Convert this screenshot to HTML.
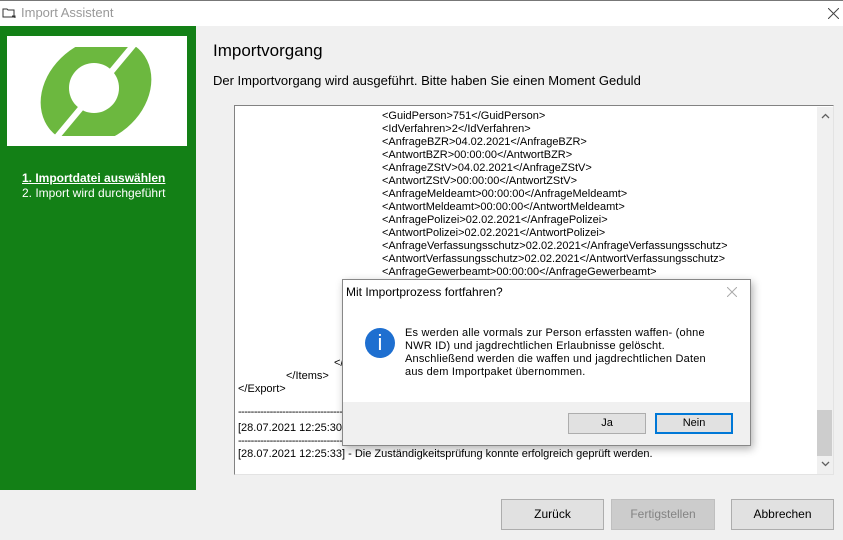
<!DOCTYPE html>
<html><head><meta charset="utf-8"><style>
*{margin:0;padding:0;box-sizing:border-box}
body{width:843px;height:540px;background:#f0f0f0;font-family:"Liberation Sans",sans-serif;position:relative;overflow:hidden;font-size:11px;color:#000}
.a{position:absolute;white-space:nowrap}
.btn{position:absolute;border:1px solid #adadad;background:#e1e1e1;text-align:center;font-size:12px}
</style></head><body>
<div class="a" style="left:0;top:0;width:843px;height:26px;background:#fff;border-top:1px solid #777"></div>
<svg class="a" style="left:2px;top:7px" width="14" height="12"><path d="M1 2h4l1 1h6v7H1z" fill="none" stroke="#333"/><path d="M10 9h3v2" stroke="#333" fill="none"/></svg>
<div class="a" style="left:21px;top:5px;font-size:13px;color:#999">Import Assistent</div>
<svg class="a" style="left:828px;top:8px" width="11" height="11"><path d="M0 0L11 11M11 0L0 11" stroke="#444" stroke-width="1"/></svg>
<div class="a" style="left:0;top:26px;width:196px;height:464px;background:#138016"></div>
<div class="a" style="left:7px;top:36px;width:180px;height:110px;background:#fff"></div>
<svg class="a" style="left:7px;top:36px" width="180" height="110">
<ellipse cx="89" cy="55" rx="60" ry="48" fill="#6cb83f" transform="rotate(-40 89 55)"/>
<circle cx="87" cy="52" r="25" fill="#fff"/>
<path d="M139 -6 L39 114" stroke="#fff" stroke-width="6"/>
<rect x="0" y="0" width="180" height="11" fill="#fff"/>
<rect x="0" y="100" width="180" height="10" fill="#fff"/>
</svg>
<div class="a" style="left:22px;top:171px;color:#fff;font-weight:bold;font-size:12px;text-decoration:underline">1. Importdatei auswählen</div>
<div class="a" style="left:22px;top:186px;color:#fff;font-size:12px">2. Import wird durchgeführt</div>
<div class="a" style="left:213px;top:41px;font-size:17px">Importvorgang</div>
<div class="a" style="left:213px;top:73px;font-size:13px">Der Importvorgang wird ausgeführt. Bitte haben Sie einen Moment Geduld</div>
<div class="a" style="left:234px;top:105px;width:600px;height:370px;background:#fff;border:1px solid #828282;border-bottom-color:#e3e3e3;border-right-color:#e3e3e3"></div>
<div class="a" style="left:817px;top:107px;width:16px;height:367px;background:#f0f0f0"></div>
<div class="a" style="left:817px;top:410px;width:15px;height:46px;background:#cdcdcd"></div>
<svg class="a" style="left:821px;top:113px" width="9" height="6"><path d="M1 5L4.5 1.5L8 5" stroke="#606060" fill="none" stroke-width="1.3"/></svg>
<svg class="a" style="left:821px;top:461px" width="9" height="6"><path d="M1 1L4.5 4.5L8 1" stroke="#606060" fill="none" stroke-width="1.3"/></svg>
<div class="a" style="left:382px;top:110px;line-height:13px">&lt;GuidPerson&gt;751&lt;/GuidPerson&gt;<br>&lt;IdVerfahren&gt;2&lt;/IdVerfahren&gt;<br>&lt;AnfrageBZR&gt;04.02.2021&lt;/AnfrageBZR&gt;<br>&lt;AntwortBZR&gt;00:00:00&lt;/AntwortBZR&gt;<br>&lt;AnfrageZStV&gt;04.02.2021&lt;/AnfrageZStV&gt;<br>&lt;AntwortZStV&gt;00:00:00&lt;/AntwortZStV&gt;<br>&lt;AnfrageMeldeamt&gt;00:00:00&lt;/AnfrageMeldeamt&gt;<br>&lt;AntwortMeldeamt&gt;00:00:00&lt;/AntwortMeldeamt&gt;<br>&lt;AnfragePolizei&gt;02.02.2021&lt;/AnfragePolizei&gt;<br>&lt;AntwortPolizei&gt;02.02.2021&lt;/AntwortPolizei&gt;<br>&lt;AnfrageVerfassungsschutz&gt;02.02.2021&lt;/AnfrageVerfassungsschutz&gt;<br>&lt;AntwortVerfassungsschutz&gt;02.02.2021&lt;/AntwortVerfassungsschutz&gt;<br>&lt;AnfrageGewerbeamt&gt;00:00:00&lt;/AnfrageGewerbeamt&gt;</div>
<div class="a" style="left:334px;top:357px">&lt;/</div>
<div class="a" style="left:286px;top:370px">&lt;/Items&gt;</div>
<div class="a" style="left:238px;top:383px">&lt;/Export&gt;</div>
<div class="a" style="left:238px;top:406px;letter-spacing:-0.5px">----------------------------------------</div>
<div class="a" style="left:238px;top:422px">[28.07.2021 12:25:30</div>
<div class="a" style="left:238px;top:435px;letter-spacing:-0.5px">----------------------------------------</div>
<div class="a" style="left:238px;top:448px">[28.07.2021 12:25:33] - Die Zuständigkeitsprüfung konnte erfolgreich geprüft werden.</div>
<div class="a" style="left:342px;top:279px;width:409px;height:167px;background:#fff;border:1px solid #888;box-shadow:2px 3px 8px rgba(0,0,0,.3)"></div>
<div class="a" style="left:343px;top:402px;width:407px;height:43px;background:#f0f0f0"></div>
<div class="a" style="left:346px;top:285px;font-size:12px">Mit Importprozess fortfahren?</div>
<svg class="a" style="left:727px;top:287px" width="10" height="10"><path d="M0 0L10 10M10 0L0 10" stroke="#aaa" stroke-width="1"/></svg>
<div class="a" style="left:365px;top:328px;width:30px;height:30px;border-radius:50%;background:#1e6fd0;color:#fff;text-align:center;font-size:22px;line-height:30px">i</div>
<div class="a" style="left:405px;top:327px;line-height:13px;font-size:11px;letter-spacing:0.2px">Es werden alle vormals zur Person erfassten waffen- (ohne<br>NWR ID) und jagdrechtlichen Erlaubnisse gelöscht.<br>Anschließend werden die waffen und jagdrechtlichen Daten<br>aus dem Importpaket übernommen.</div>
<div class="btn" style="left:568px;top:413px;width:78px;height:21px;line-height:19px;font-size:11px">Ja</div>
<div class="btn" style="left:655px;top:413px;width:78px;height:21px;line-height:17px;font-size:11px;border:2px solid #0078d7">Nein</div>
<div class="btn" style="left:501px;top:499px;width:103px;height:31px;line-height:29px">Zurück</div>
<div class="btn" style="left:611px;top:499px;width:104px;height:31px;line-height:29px;background:#ccc;border-color:#bfbfbf;color:#838383">Fertigstellen</div>
<div class="btn" style="left:731px;top:499px;width:103px;height:31px;line-height:29px">Abbrechen</div>
</body></html>
